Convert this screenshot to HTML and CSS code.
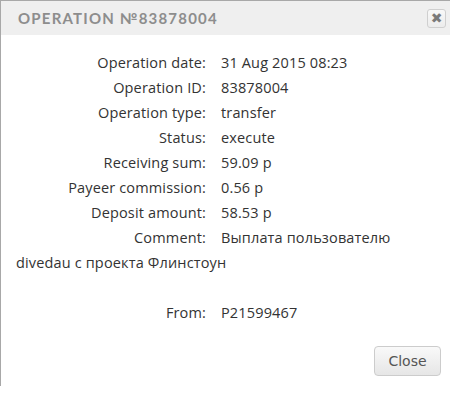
FILE: index.html
```html
<!DOCTYPE html>
<html>
<head>
<meta charset="utf-8">
<link rel="stylesheet" href="styles.css">
</head>
<body>
<div class="dialog">
  <div class="dialog-header">
    <span class="dialog-title">Operation №83878004</span>
    <button class="dialog-x" type="button">&#10006;</button>
  </div>
  <div class="dialog-body">
    <span class="lbl">Operation date:</span>31 Aug 2015 08:23<br>
    <span class="lbl">Operation ID:</span>83878004<br>
    <span class="lbl">Operation type:</span>transfer<br>
    <span class="lbl">Status:</span>execute<br>
    <span class="lbl">Receiving sum:</span>59.09 р<br>
    <span class="lbl">Payeer commission:</span>0.56 р<br>
    <span class="lbl">Deposit amount:</span>58.53 р<br>
    <span class="lbl">Comment:</span>Выплата пользователю divedau с проекта Флинстоун<br>
    <br>
    <span class="lbl">From:</span>P21599467
  </div>
  <div class="dialog-footer">
    <button class="btn" type="button">Close</button>
  </div>
</div>
</body>
</html>
```
FILE: styles.css
```css
html, body {
  margin: 0;
  padding: 0;
  background: #ffffff;
  overflow: hidden;
}
.dialog {
  width: 450px;
  border-top: 1px solid #a8a8a8;
  border-left: 1px solid #a8a8a8;
  background: #fff;
  box-sizing: border-box;
}
.dialog-header {
  height: 34px;
  background: #efefef;
  display: flex;
  align-items: center;
  justify-content: space-between;
  padding: 0 4px 0 17px;
}
.dialog-title {
  font-family: Lato, sans-serif;
  font-weight: bold;
  font-size: 15px;
  letter-spacing: 1.2px;
  text-transform: uppercase;
  color: #8d8d8d;
}
.dialog-x {
  width: 19px;
  height: 19px;
  padding: 0;
  border: 1px solid #cfcfcf;
  border-radius: 3px;
  background: linear-gradient(#f8f8f8, #ececec);
  color: #7a7a7a;
  font-family: "DejaVu Sans", sans-serif;
  font-size: 14px;
  line-height: 17px;
  margin-top: 1px;
}
.dialog-body {
  padding: 15px 16px 0 15px;
  font-family: "Open Sans", sans-serif;
  font-size: 14.5px;
  letter-spacing: 0.15px;
  line-height: 25px;
  color: #333;
}
.lbl {
  display: inline-block;
  width: 190px;
  text-align: right;
  margin-right: 15px;
}
.dialog-footer {
  display: flex;
  justify-content: flex-end;
  padding: 21px 9px 10px 0;
}
.btn {
  width: 67px;
  height: 30px;
  border: 1px solid #cccccc;
  border-radius: 4px;
  background: linear-gradient(#f9f9f9, #e6e6e6);
  font-family: "DejaVu Sans", sans-serif;
  font-size: 14px;
  color: #555;
  padding: 0;
}
```
